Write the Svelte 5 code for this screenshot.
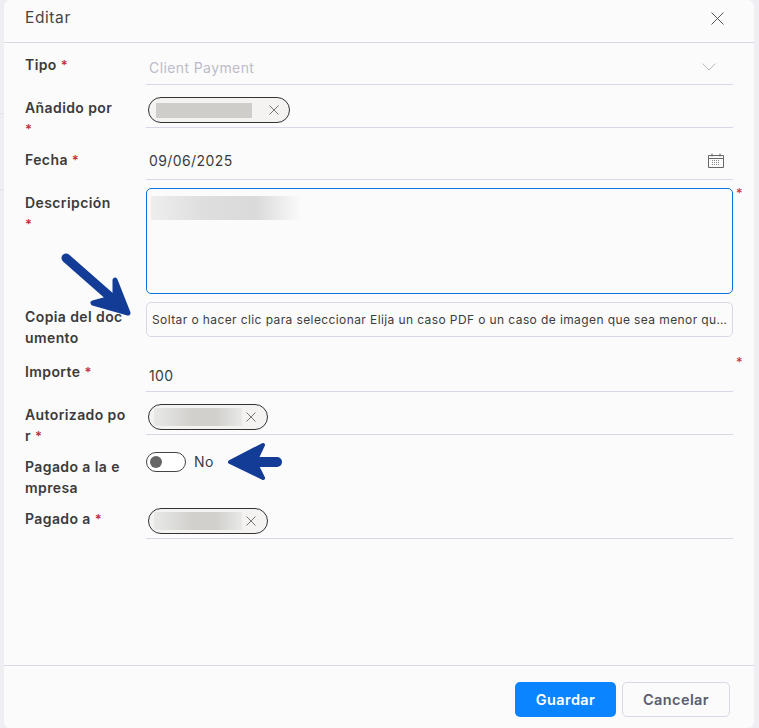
<script>
  const rows = [
    { label: 'Tipo', star: true, kind: 'select', value: 'Client Payment' },
    { label: 'Añadido por\n', star: true, kind: 'chip', cls: 'added' },
    { label: 'Fecha', star: true, kind: 'date', value: '09/06/2025' },
    { label: 'Descripción\n', star: true, kind: 'textarea' },
    { label: 'Copia del doc\numento', kind: 'upload' },
    { label: 'Importe', star: true, kind: 'number', value: '100' },
    { label: 'Autorizado po\nr', star: true, kind: 'chip', cls: 'short' },
    { label: 'Pagado a la e\nmpresa', kind: 'toggle' },
    { label: 'Pagado a', star: true, kind: 'chip', cls: 'short' },
  ];
</script>

<div class="page">
  <div class="modal">
    <header class="head">
      <span class="title">Editar</span>
      <svg class="close" width="13" height="13" viewBox="0 0 13 13"><path d="M.5.5l12 12M12.5.5l-12 12" stroke="#555" fill="none"/></svg>
    </header>

    <div class="form">
      {#each rows as row}
        <div class="row {row.kind}">
          <div class="label">{row.label}{#if row.star}{row.label.endsWith('\n') ? '' : ' '}<span class="star">*</span>{/if}</div>
          <div class="control">
            {#if row.kind === 'select'}
              <div class="line"><span class="muted">{row.value}</span>
                <svg width="14" height="8" viewBox="0 0 14 8"><path d="M.5.5L7 7l6.5-6.5" stroke="#bbb" fill="none"/></svg>
              </div>
            {:else if row.kind === 'chip'}
              <div class="line">
                <div class="tag {row.cls}">
                  <span class="redact"></span>
                  <svg width="10" height="10" viewBox="0 0 10 10"><path d="M.5.5l9 9M9.5.5l-9 9" stroke="#777" fill="none"/></svg>
                </div>
              </div>
            {:else if row.kind === 'date'}
              <div class="line"><span>{row.value}</span>
                <svg width="16" height="15" viewBox="0 0 16 15">
                  <path d="M.5 2.5h15v12H.5zM.5 5.5h15M4 .5v3M12 .5v3" stroke="#666" fill="none"/>
                  <path d="M4 7.5h8M4 9.5h8M4 11.5h8" stroke="#888" stroke-dasharray="1 1" fill="none"/>
                </svg>
              </div>
            {:else if row.kind === 'textarea'}
              <div class="area"><span class="blur"></span></div>
              <span class="star side">*</span>
            {:else if row.kind === 'upload'}
              <div class="drop">Soltar o hacer clic para seleccionar Elija un caso PDF o un caso de imagen que sea menor que 5 MB</div>
            {:else if row.kind === 'number'}
              <div class="line"><span>{row.value}</span></div>
              <span class="star side">*</span>
            {:else}
              <div class="switch-wrap"><span class="switch"><i></i></span><span class="off">No</span></div>
            {/if}
          </div>
        </div>
      {/each}
    </div>

    <footer class="foot">
      <button class="save">Guardar</button>
      <button class="cancel">Cancelar</button>
    </footer>
  </div>

  <svg class="arrow one" width="80" height="80" viewBox="0 0 80 80">
    <path d="M8 8L58 52" stroke="#123c96" stroke-width="9" stroke-linecap="round" fill="none"/>
    <path d="M35 53L70 63L57 30L57 47Z" stroke="#123c96" stroke-width="5" stroke-linejoin="round" fill="#123c96"/>
  </svg>
  <svg class="arrow two" width="60" height="44" viewBox="0 0 60 44">
    <path d="M52 22H20" stroke="#123c96" stroke-width="10" stroke-linecap="round" fill="none"/>
    <path d="M5 22L38 5L30 22L38 38Z" stroke="#123c96" stroke-width="4" stroke-linejoin="round" fill="#123c96"/>
  </svg>
</div>

<style>
  :global(body) {
    margin: 0;
    background: #eeeef3;
  }

  .page {
    position: relative;
    height: 728px;
    padding: 0 5px 0 4px;
    font-family: 'Inter', 'Noto Sans', sans-serif;
    font-size: 14px;
    letter-spacing: 0.4px;
    color: #3c3c3c;
    overflow: hidden;
    box-sizing: border-box;
    background:
      linear-gradient(#e2e2e8, #e2e2e8) 0 113px / 4px 1px no-repeat,
      linear-gradient(#e2e2e8, #e2e2e8) 0 189px / 4px 1px no-repeat;
  }

  .modal {
    height: 728px;
    background: #fbfbfc;
    border-radius: 6px;
    display: flex;
    flex-direction: column;
  }

  .head {
    height: 43px;
    flex: none;
    box-sizing: border-box;
    border-bottom: 1px solid #d9d8e8;
    padding: 0 30px 0 21px;
    display: flex;
    justify-content: space-between;
    align-items: center;
  }

  .title {
    font-size: 15.5px;
    margin-top: -8px;
    letter-spacing: 0.6px;
    color: #444;
  }

  .close {
    margin-top: -6px;
  }

  .form {
    flex: 1;
    padding: 0 21px;
  }

  .row {
    position: relative;
    display: grid;
    grid-template-columns: 121px 587px;
  }

  .label {
    font-weight: 600;
    font-size: 14px;
    line-height: 21px;
    white-space: pre-line;
    color: #3b3b3b;
  }

  .star {
    color: #c0303c;
    font-size: 13px;
  }

  .side {
    position: absolute;
    left: 711px;
    line-height: 1;
  }

  .control {
    min-width: 0;
  }

  .line {
    display: flex;
    justify-content: space-between;
    align-items: center;
    border-bottom: 1px solid #d9d8e8;
    box-sizing: border-box;
  }

  .muted {
    color: #bcbcca;
  }

  .row.select { height: 42px; }
  .row.select .label { padding-top: 11px; }
  .row.select .line { height: 42px; padding: 7px 17px 0 3px; }

  .row.chip { height: 43px; }
  .row.chip .label { padding-top: 12px; }
  .row.chip .line { height: 43px; padding: 8px 0 0 2px; }

  .row.date { height: 52px; }
  .row.date .label { padding-top: 21px; }
  .row.date .line { height: 52px; padding: 14px 9px 0 3px; }

  .row.textarea { height: 114px; }
  .row.textarea .label { padding-top: 12px; }
  .row.textarea .side { top: 7px; }

  .area {
    margin-top: 8px;
    height: 106px;
    box-sizing: border-box;
    border: 1px solid #0a74da;
    border-radius: 5px;
    padding: 7px 4px;
  }

  .area .blur {
    display: block;
    width: 150px;
    height: 24px;
    background: linear-gradient(90deg, #eeeeee, #dedede 35%, #dadada 70%, #fbfbfc);
  }

  .row.upload { height: 43px; }
  .row.upload .label { padding-top: 12px; }

  .drop {
    margin-top: 8px;
    height: 35px;
    box-sizing: border-box;
    border: 1px solid #d9d8e8;
    border-radius: 5px;
    padding: 0 1px 0 5px;
    font-size: 12px;
    line-height: 33px;
    white-space: nowrap;
    overflow: hidden;
    text-overflow: ellipsis;
  }

  .row.number { height: 55px; }
  .row.number .label { padding-top: 24px; }
  .row.number .line { height: 55px; padding: 22px 8px 0 3px; }
  .row.number .side { top: 19px; }

  .tag {
    height: 26px;
    box-sizing: border-box;
    border: 1px solid #333;
    border-radius: 13px;
    background: #f4f3f1;
    display: flex;
    align-items: center;
    justify-content: space-between;
    padding: 0 10px 0 7px;
  }

  .tag.added { width: 142px; }
  .tag.short { width: 120px; padding-left: 5px; padding-right: 11px; }

  .redact {
    display: block;
    width: 96px;
    height: 15px;
    background: #cfcdca;
  }

  .tag.short .redact {
    width: 88px;
    height: 18px;
    background: linear-gradient(90deg, #e8e8e6, #d1d0cd 45%, #d1d0cd 70%, #e8e8e6);
  }

  .row.toggle { height: 61px; }
  .row.toggle .label { margin-top: 21px; }

  .switch-wrap {
    display: flex;
    align-items: center;
    gap: 8px;
    margin-top: 17px;
  }

  .off {
    margin-top: -1px;
  }

  .switch {
    width: 40px;
    height: 20px;
    box-sizing: border-box;
    border: 1px solid #444;
    border-radius: 10px;
    background: #fff;
    display: flex;
    align-items: center;
    padding-left: 3px;
  }

  .switch i {
    width: 12px;
    height: 12px;
    border-radius: 50%;
    background: #666;
  }

  .foot {
    height: 63px;
    flex: none;
    box-sizing: border-box;
    border-top: 1px solid #d9d8e8;
    display: flex;
    justify-content: flex-end;
    align-items: flex-start;
    gap: 6px;
    padding: 16px 24px 0 0;
  }

  button {
    height: 35px;
    border-radius: 5px;
    font-family: inherit;
    font-size: 14.5px;
    letter-spacing: 0.4px;
    font-weight: 600;
    cursor: pointer;
  }

  .save {
    width: 101px;
    background: #0a84ff;
    border: none;
    color: #fff;
  }

  .cancel {
    width: 108px;
    background: #fbfbfc;
    border: 1px solid #d9d8e8;
    color: #5a5c70;
  }

  .arrow {
    position: absolute;
    pointer-events: none;
  }

  .arrow.one { left: 58px; top: 250px; }
  .arrow.two { left: 225px; top: 440px; }
</style>
